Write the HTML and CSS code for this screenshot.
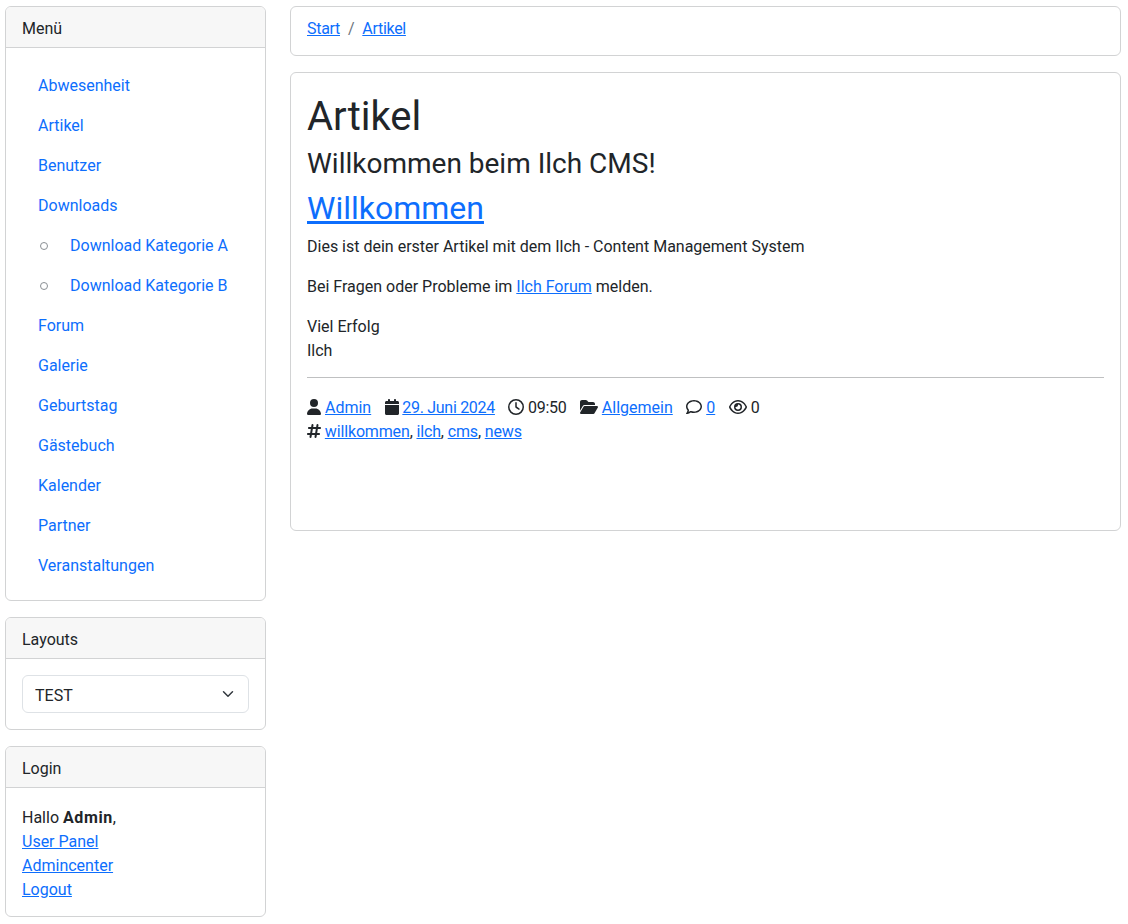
FILE: index.html
```html
<!DOCTYPE html>
<html lang="de">
<head>
    <meta charset="UTF-8">
    <meta name="viewport" content="width=device-width, initial-scale=1.0">
    <title>Artikel</title>
    <link rel="stylesheet" href="styles.css">
</head>
<body>
    <div class="page">
        <aside class="sidebar">
            <div class="card">
                <div class="card-header">Menü</div>
                <div class="card-body">
                    <ul class="menu">
                        <li><a href="#">Abwesenheit</a></li>
                        <li><a href="#">Artikel</a></li>
                        <li><a href="#">Benutzer</a></li>
                        <li><a href="#">Downloads</a>
                            <ul class="submenu">
                                <li><a href="#">Download Kategorie A</a></li>
                                <li><a href="#">Download Kategorie B</a></li>
                            </ul>
                        </li>
                        <li><a href="#">Forum</a></li>
                        <li><a href="#">Galerie</a></li>
                        <li><a href="#">Geburtstag</a></li>
                        <li><a href="#">Gästebuch</a></li>
                        <li><a href="#">Kalender</a></li>
                        <li><a href="#">Partner</a></li>
                        <li><a href="#">Veranstaltungen</a></li>
                    </ul>
                </div>
            </div>
            <div class="card">
                <div class="card-header">Layouts</div>
                <div class="card-body">
                    <select class="form-select">
                        <option>TEST</option>
                    </select>
                </div>
            </div>
            <div class="card">
                <div class="card-header">Login</div>
                <div class="card-body login-body">
                    Hallo <strong>Admin</strong>,<br>
                    <a href="#">User Panel</a><br>
                    <a href="#">Admincenter</a><br>
                    <a href="#">Logout</a>
                </div>
            </div>
        </aside>

        <main class="content">
            <nav class="card breadcrumb">
                <a href="#">Start</a><span class="divider">/</span><a href="#">Artikel</a>
            </nav>
            <div class="card">
                <div class="card-body">
                    <h1>Artikel</h1>
                    <h3>Willkommen beim Ilch CMS!</h3>
                    <h2><a href="#">Willkommen</a></h2>
                    <p>Dies ist dein erster Artikel mit dem Ilch - Content Management System</p>
                    <p>Bei Fragen oder Probleme im <a href="#">Ilch Forum</a> melden.</p>
                    <p class="last">Viel Erfolg<br>Ilch</p>
                    <hr>
                    <div class="meta">
                        <div>
                            <span class="meta-item"><svg class="icon" viewBox="0 0 448 512"><path d="M224 256A128 128 0 1 0 224 0a128 128 0 1 0 0 256zm-45.7 48C79.8 304 0 383.8 0 482.3C0 498.7 13.3 512 29.7 512H418.3c16.4 0 29.7-13.3 29.7-29.7C448 383.8 368.2 304 269.7 304H178.3z"/></svg> <a href="#">Admin</a></span>
                            <span class="meta-item digits"><svg class="icon" viewBox="0 0 448 512"><path d="M96 32V64H48C21.5 64 0 85.5 0 112v48H448V112c0-26.5-21.5-48-48-48H352V32c0-17.7-14.3-32-32-32s-32 14.3-32 32V64H160V32c0-17.7-14.3-32-32-32S96 14.3 96 32zM448 192H0V464c0 26.5 21.5 48 48 48H400c26.5 0 48-21.5 48-48V192z"/></svg> <a href="#">29. Juni 2024</a></span>
                            <span class="meta-item digits"><svg class="icon" viewBox="0 0 512 512"><path d="M464 256A208 208 0 1 1 48 256a208 208 0 1 1 416 0zM0 256a256 256 0 1 0 512 0A256 256 0 1 0 0 256zM232 120V256c0 8 4 15.5 10.7 20l96 64c11 7.4 25.9 4.4 33.3-6.7s4.4-25.9-6.7-33.3L280 243.2V120c0-13.3-10.7-24-24-24s-24 10.7-24 24z"/></svg> 09:50</span>
                            <span class="meta-item"><svg class="icon" viewBox="0 0 576 512"><path d="M88.7 223.8L0 375.8V96C0 60.7 28.7 32 64 32H181.5c17 0 33.3 6.7 45.3 18.7l26.5 26.5c12 12 28.3 18.7 45.3 18.7H416c35.3 0 64 28.7 64 64v32H144c-22.8 0-43.8 12.1-55.3 31.8zm27.6 16.1C122.1 230 132.6 224 144 224H544c11.5 0 22 6.1 27.7 16.1s5.7 22.2-.1 32.1l-112 192C453.9 474 443.4 480 432 480H32c-11.5 0-22-6.1-27.7-16.1s-5.7-22.2 .1-32.1l112-192z"/></svg> <a href="#">Allgemein</a></span>
                            <span class="meta-item"><svg class="icon" viewBox="0 0 512 512"><path d="M123.6 391.3c12.9-9.4 29.6-11.8 44.6-6.4c26.5 9.6 56.2 15.1 87.8 15.1c124.7 0 208-80.5 208-160s-83.3-160-208-160S48 160.5 48 240c0 32 12.4 62.8 35.7 89.2c8.6 9.7 12.8 22.5 11.8 35.5c-1.4 18.1-5.7 34.7-11.3 49.4c17-7.9 31.1-16.7 39.4-22.7zM21.2 431.9c1.8-2.7 3.5-5.4 5.1-8.1c10-16.6 19.5-38.4 21.4-62.9C17.7 326.8 0 285.1 0 240C0 125.1 114.6 32 256 32s256 93.1 256 208s-114.6 208-256 208c-37.1 0-72.3-6.4-104.1-17.9c-11.9 8.7-31.3 20.6-54.3 30.6c-15.1 6.6-32.3 12.6-50.1 16.1c-.8 .2-1.6 .3-2.4 .5c-4.4 .8-8.7 1.5-13.2 1.9c-.2 0-.5 .1-.7 .1c-5.1 .5-10.2 .8-15.3 .8c-6.5 0-12.3-3.9-14.8-9.9c-2.5-6-1.1-12.8 3.4-17.4c4.1-4.2 7.8-8.7 11.3-13.5c1.7-2.3 3.3-4.6 4.8-6.9c.1-.2 .2-.3 .3-.5z"/></svg> <a href="#">0</a></span>
                            <span class="meta-item"><svg class="icon" viewBox="0 0 576 512"><path d="M288 80c-65.2 0-118.8 29.6-159.9 67.7C89.6 183.5 63 226 49.4 256c13.6 30 40.2 72.5 78.6 108.3C169.2 402.4 222.8 432 288 432s118.8-29.6 159.9-67.7C486.4 328.5 513 286 526.6 256c-13.6-30-40.2-72.5-78.6-108.3C406.8 109.6 353.2 80 288 80zM95.4 112.6C142.5 68.8 207.2 32 288 32s145.5 36.8 192.6 80.6c46.8 43.5 78.1 95.4 93 131.1c3.3 7.9 3.3 16.7 0 24.6c-14.9 35.7-46.2 87.7-93 131.1C433.5 443.2 368.8 480 288 480s-145.5-36.8-192.6-80.6C48.6 356 17.3 304 2.5 268.3c-3.3-7.9-3.3-16.7 0-24.6C17.3 208 48.6 156 95.4 112.6zM288 336c44.2 0 80-35.8 80-80s-35.8-80-80-80c-.7 0-1.3 0-2 0c1.3 5.1 2 10.5 2 16c0 35.3-28.7 64-64 64c-5.5 0-10.9-.7-16-2c0 .7 0 1.3 0 2c0 44.2 35.8 80 80 80zm0-208a128 128 0 1 1 0 256 128 128 0 1 1 0-256z"/></svg> 0</span>
                        </div>
                        <div class="tags">
                            <svg class="icon" viewBox="0 0 448 512"><path d="M181.3 32.4c17.4 2.9 29.2 19.4 26.3 36.8L197.8 128h95.1l11.5-69.3c2.9-17.4 19.4-29.2 36.8-26.3s29.2 19.4 26.3 36.8L357.8 128H416c17.7 0 32 14.3 32 32s-14.3 32-32 32H347.1L325.8 320H384c17.7 0 32 14.3 32 32s-14.3 32-32 32H315.1l-11.5 69.3c-2.9 17.4-19.4 29.2-36.8 26.3s-29.2-19.4-26.3-36.8l9.8-58.7H155.1l-11.5 69.3c-2.9 17.4-19.4 29.2-36.8 26.3s-29.2-19.4-26.3-36.8L90.2 384H32c-17.7 0-32-14.3-32-32s14.3-32 32-32h68.9l21.3-128H64c-17.7 0-32-14.3-32-32s14.3-32 32-32h68.9l11.5-69.3c2.9-17.4 19.4-29.2 36.8-26.3zM187.1 192L165.8 320h95.1l21.3-128H187.1z"/></svg>
                            <a href="#">willkommen</a>, <a href="#">ilch</a>, <a href="#">cms</a>, <a href="#">news</a>
                        </div>
                    </div>
                </div>
            </div>
        </main>
    </div>
</body>
</html>
```

FILE: styles.css
```css
* {
    box-sizing: border-box;
}
body {
    margin: 0;
    font-family: Roboto, "Noto Sans", sans-serif;
    font-size: 16px;
    line-height: 24px;
    color: #212529;
    background-color: #fff;
}
a {
    color: #0d6efd;
}
strong {
    letter-spacing: 0.6px;
}
.page {
    display: grid;
    grid-template-columns: 261px 831px;
    column-gap: 24px;
    align-items: start;
    padding: 6px 0 0 5px;
}
.sidebar,
.content {
    display: flex;
    flex-direction: column;
    gap: 16px;
}
.card {
    border: 1px solid #d2d3d4;
    border-radius: 6px;
    background-color: #fff;
}
.card-header {
    padding: 10px 16px 6px;
    background-color: #f7f7f7;
    border-bottom: 1px solid #d2d3d4;
    border-radius: 5px 5px 0 0;
}
.card-body {
    padding: 16px;
}
.login-body {
    padding: 18px 16px 14px;
}
.menu,
.submenu {
    margin: 0;
    list-style: none;
}
.menu {
    padding: 0;
}
.submenu {
    padding-left: 32px;
}
.submenu li {
    position: relative;
}
.submenu li::before {
    content: "";
    position: absolute;
    left: -14px;
    top: 18px;
    width: 6px;
    height: 6px;
    border: 1px solid #8a8f94;
    border-radius: 50%;
}
.menu a {
    display: block;
    padding: 10px 16px 6px;
    text-decoration: none;
}
.form-select {
    display: block;
    width: 100%;
    height: 38px;
    padding: 8px 36px 4px 12px;
    font: inherit;
    color: #212529;
    background-color: #fff;
    background-image: url("data:image/svg+xml,%3csvg xmlns='http://www.w3.org/2000/svg' viewBox='0 0 16 16'%3e%3cpath fill='none' stroke='%23343a40' stroke-linecap='round' stroke-linejoin='round' stroke-width='2' d='m2 5 6 6 6-6'/%3e%3c/svg%3e");
    background-repeat: no-repeat;
    background-position: right 12px center;
    background-size: 16px 12px;
    border: 1px solid #dee2e6;
    border-radius: 6px;
    appearance: none;
}
.breadcrumb {
    padding: 8px 16px;
    height: 50px;
    line-height: 27px;
    letter-spacing: -0.3px;
}
.divider {
    padding: 0 8px;
    color: #6c757d;
}
h1,
h2,
h3 {
    margin: 0 0 8px;
    font-weight: 400;
    line-height: 1.2;
}
h1 {
    padding-top: 4px;
    margin-bottom: 6px;
    font-size: 40px;
}
h2 {
    font-size: 32px;
}
h3 {
    font-size: 28px;
}
p {
    margin: 0 0 16px;
}
p.last {
    margin-bottom: 14px;
}
hr {
    margin: 14px 0 18px;
    border: 0;
    border-top: 1px solid #bfc0c1;
}
.meta {
    margin-bottom: 70px;
}
.meta-item {
    margin-right: 9.5px;
}
.digits {
    letter-spacing: -0.3px;
}
.tags {
    letter-spacing: -0.15px;
}
.icon {
    display: inline-block;
    height: 16px;
    vertical-align: -2px;
    fill: #212529;
}
```
